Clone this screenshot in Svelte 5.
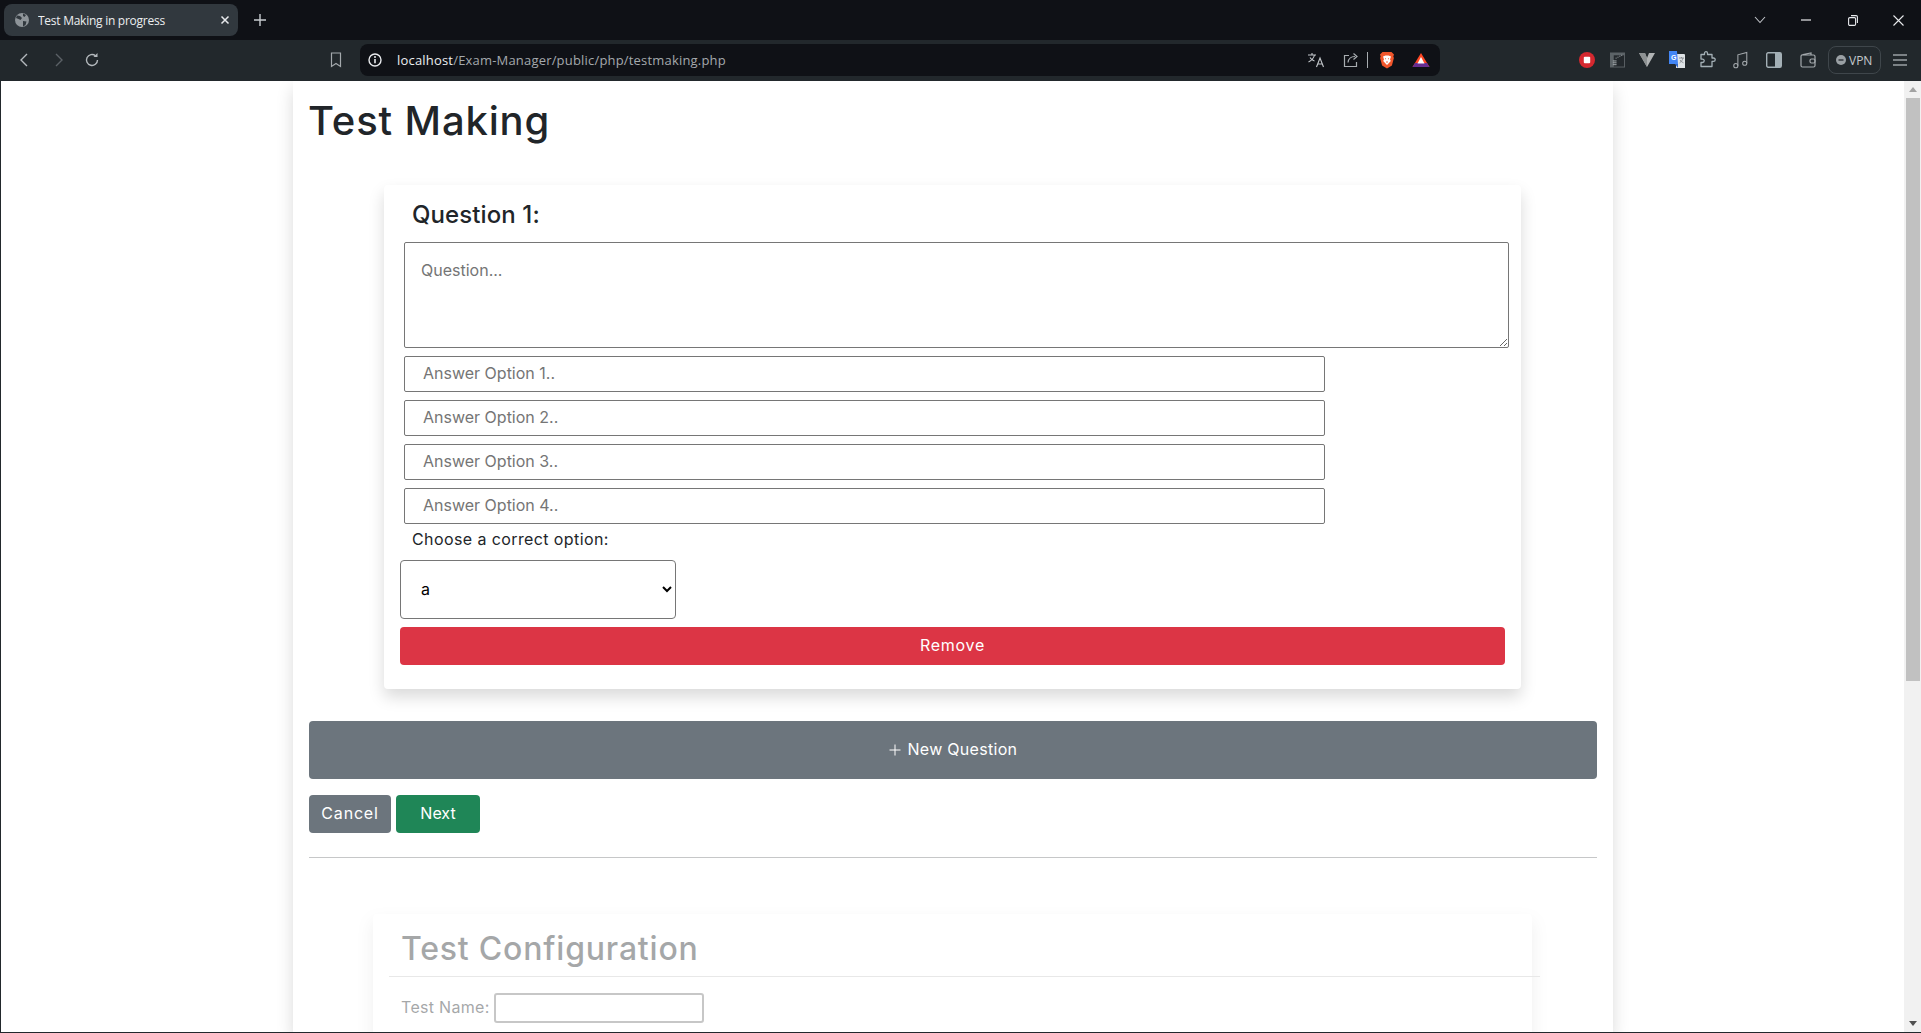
<script>
  const answers = [1, 2, 3, 4];
</script>

<div class="window">
  <header class="tabbar">
    <div class="tab">
      <svg class="favicon" viewBox="0 0 16 16" width="16" height="16"><circle cx="8" cy="8" r="7" fill="#8e9499"/><path d="M3 3.500l3 .5 2 2-1.500 2-2-1L2 6zM9 9l3.500 .5-1 3.500L9 14.500zM9 1.500l3 1.500-1.500 2L9 4z" fill="#31383e"/></svg>
      <span class="tab-title">Test Making in progress</span>
      <svg class="tab-close" viewBox="0 0 10 10" width="10" height="10"><path d="M1.500 1.500l7 7M8.500 1.500l-7 7" stroke="#e8eaed" stroke-width="1.500"/></svg>
    </div>
    <svg class="new-tab" viewBox="0 0 12 12" width="12" height="12"><path d="M6 0v12M0 6h12" stroke="#c8ccd0" stroke-width="1.400"/></svg>
    <div class="spacer"></div>
    <svg class="win w-chev" viewBox="0 0 12 8" width="12" height="8"><path d="M1 1l5 5.500L11 1" fill="none" stroke="#c0c4c8" stroke-width="1.100"/></svg>
    <svg class="win w-min" viewBox="0 0 10 2" width="10" height="2"><path d="M0 1h10" stroke="#e8eaed" stroke-width="1.200"/></svg>
    <svg class="win w-max" viewBox="0 0 10 11" width="10" height="11"><rect x=".6" y="2.600" width="7" height="7.800" rx="1.200" fill="none" stroke="#e8eaed" stroke-width="1.100"/><path d="M3 .6h5.200a1.200 1.200 0 0 1 1.200 1.200V8" fill="none" stroke="#e8eaed" stroke-width="1.100"/></svg>
    <svg class="win w-close" viewBox="0 0 11 11" width="11" height="11"><path d="M.5 .5l10 10M10.500 .5l-10 10" stroke="#e8eaed" stroke-width="1.100"/></svg>
  </header>

  <nav class="toolbar">
    <svg class="tb back" viewBox="0 0 10 14" width="10" height="14"><path d="M8 1L2 7l6 6" fill="none" stroke="#b4b9bd" stroke-width="1.400"/></svg>
    <svg class="tb forward" viewBox="0 0 10 14" width="10" height="14"><path d="M2 1l6 6-6 6" fill="none" stroke="#5b6166" stroke-width="1.400"/></svg>
    <svg class="tb reload" viewBox="0 0 16 16" width="16" height="16"><path d="M13.500 8a5.500 5.500 0 1 1-2-4.300" fill="none" stroke="#b4b9bd" stroke-width="1.400"/><path d="M9.500 5h4V1z" fill="#b4b9bd"/></svg>
    <svg class="tb bookmark" viewBox="0 0 12 16" width="12" height="16"><path d="M1.500 1h9v13.500L6 11.500l-4.500 3z" fill="none" stroke="#a4a9ad" stroke-width="1.200"/></svg>

    <div class="urlbar">
      <svg class="info" viewBox="0 0 14 14" width="14" height="14"><circle cx="7" cy="7" r="6" fill="none" stroke="#e8eaed" stroke-width="1.400"/><path d="M7 6v4.200" stroke="#e8eaed" stroke-width="1.600"/><circle cx="7" cy="4" r="1" fill="#e8eaed"/></svg>
      <span class="url"><b>localhost</b>/Exam-Manager/public/php/testmaking.php</span>
      <div class="spacer"></div>
      <svg class="translate" viewBox="0 0 18 16" width="18" height="16"><path d="M1 3h8M5 1v2M7.500 3c-.7 3-3 5.500-6 7M3 5.500c1 1.800 2.500 3 4.500 3.500" fill="none" stroke="#c4c8cc" stroke-width="1.100"/><path d="M9.500 15l3.500-9 3.500 9M10.700 12h4.600" fill="none" stroke="#c4c8cc" stroke-width="1.100"/></svg>
      <svg class="share" viewBox="0 0 16 16" width="16" height="16"><path d="M6 3.500H1.500v11h12V10" fill="none" stroke="#a8adb1" stroke-width="1.200"/><path d="M5 10.500c.5-4 3-6 7-6M10.500 1.500l3.500 3-3.500 3" fill="none" stroke="#a8adb1" stroke-width="1.200"/></svg>
      <span class="sep"></span>
      <svg class="brave" viewBox="0 0 16 18" width="16" height="18"><path d="M3.500 1h9L15 3.500l-.7 2 .6 1.500-2 7.500L8 17.500 3.100 14.500 1.100 7l.6-1.500-.7-2z" fill="#f1562b"/><path d="M4 5.500L6.500 4.500h3L12 5.500l-1 3 .8 1.500L9 13l-1 1-1-1-2.800-3L5 8.500z" fill="#fff"/><path d="M6 7.500l1 .5M10 7.500l-1 .5M7 11h2" stroke="#f1562b" stroke-width=".9"/></svg>
      <svg class="bat" viewBox="0 0 18 16" width="18" height="16"><path d="M9 1l8.500 14H.5z" fill="#ff4724"/><path d="M.5 15h17L15 11H3z" fill="#662d91"/><path d="M9 5l3.500 6.500h-7z" fill="#fff"/></svg>
    </div>

    <div class="ext">
      <svg class="e-rec" viewBox="0 0 16 16" width="16" height="16"><circle cx="8" cy="8" r="8" fill="#d5282f"/><rect x="4.800" y="4.800" width="6.400" height="6.400" rx="1" fill="#fff"/></svg>
      <svg class="e-meter" viewBox="0 0 16 16" width="15" height="16"><rect width="16" height="16" fill="#5c6367"/><rect x="4" y="3" width="11" height="12" fill="#23282c"/><path d="M6 6h1M8 5h1M10 4h1M12 3h1M3 9h4M3 11h4M3 13h4" stroke="#aeb3b6" stroke-width="1"/></svg>
      <svg class="e-v" viewBox="0 0 16 14" width="16" height="14"><path d="M0 0h6l2 5 2-5h6L8 14z" fill="#b0b3b4"/><path d="M0 0h6l2 5L8 14z" fill="#8d9192"/></svg>
      <svg class="e-gt" viewBox="0 0 16 18" width="16" height="18"><path d="M7 3h8a1 1 0 0 1 1 1v13H7z" fill="#dfe3e6"/><path d="M0 0h8l1 13H0z" fill="#4285f4"/><path d="M6 13h3v4z" fill="#3367c7"/><text x="2" y="9" font-size="7" font-family="Liberation Sans" font-weight="700" fill="#fff">G</text><path d="M10 7h5M12.500 6v1M14 7c-.5 2-1.500 3.500-3.500 5M11 9c.7 1.200 2 2.300 3.500 2.800" stroke="#7c8286" stroke-width=".8" fill="none"/></svg>
      <svg class="e-puzzle" viewBox="0 0 16 18" width="16" height="18"><path d="M1 3.500h3.500V2.200a1.500 1.500 0 0 1 3 0v1.300H12V7h1.500a1.700 1.700 0 0 1 0 3.400H12v5.100H1v-4h1.500a1.700 1.700 0 0 0 0-3.400H1z" fill="none" stroke="#a4b0b6" stroke-width="1.300" stroke-linejoin="round"/></svg>
      <svg class="e-music" viewBox="0 0 16 18" width="15" height="18"><circle cx="3" cy="15" r="2.200" fill="none" stroke="#a4a9ad" stroke-width="1.100"/><circle cx="12.500" cy="12.500" r="2.200" fill="none" stroke="#a4a9ad" stroke-width="1.100"/><path d="M5.200 15V3.500L14.700 1v11.500" fill="none" stroke="#a4a9ad" stroke-width="1.100"/></svg>
      <svg class="e-side" viewBox="0 0 16 16" width="16" height="16"><rect x=".7" y=".7" width="14.600" height="14.600" rx="1.500" fill="none" stroke="#a4b0b6" stroke-width="1.400"/><rect x="9" y="1" width="6" height="14" fill="#a4b0b6"/></svg>
      <svg class="e-wallet" viewBox="0 0 16 16" width="16" height="16"><path d="M1 4.500v9a1.500 1.500 0 0 0 1.500 1.500h11a1.500 1.500 0 0 0 1.500-1.500v-9A1.500 1.500 0 0 0 13.500 3H2.500M1 4.500A2 2 0 0 1 3 2.500L11 1v2" fill="none" stroke="#a4a9ad" stroke-width="1.200"/><rect x="10" y="7" width="5" height="4" rx="1.500" fill="none" stroke="#a4a9ad" stroke-width="1.200"/></svg>
      <div class="vpn">
        <svg viewBox="0 0 10 10" width="10" height="10"><circle cx="5" cy="5" r="5" fill="#9aa0a4"/><path d="M2.500 5h5" stroke="#22282c" stroke-width="1.300"/></svg>
        <span>VPN</span>
      </div>
      <svg class="e-menu" viewBox="0 0 14 12" width="14" height="12"><path d="M0 1h14M0 6h14M0 11h14" stroke="#9aa0a4" stroke-width="1.300"/></svg>
    </div>
  </nav>

  <div class="viewport">
    <main class="page">
      <h1>Test Making</h1>

      <section class="q-card">
        <h4>Question 1:</h4>
        <textarea class="q-text" placeholder="Question..."></textarea>
        {#each answers as n}
          <input class="answer" type="text" placeholder={`Answer Option ${n}..`} />
        {/each}
        <label class="correct" for="correct">Choose a correct option:</label>
        <select id="correct" class="correct-select">
          <option>a</option><option>b</option><option>c</option><option>d</option>
        </select>
        <button class="btn danger remove">Remove</button>
      </section>

      <button class="btn secondary new-q">
        <svg viewBox="0 0 12 12" width="12" height="12"><path d="M6 .5v11M.5 6h11" stroke="#fff" stroke-width="1"/></svg>
        New Question
      </button>

      <div class="actions">
        <button class="btn secondary cancel">Cancel</button>
        <button class="btn success next">Next</button>
      </div>

      <hr class="divider" />

      <section class="config">
        <h2>Test Configuration</h2>
        <hr class="config-rule" />
        <div class="field">
          <label for="testname">Test Name:</label>
          <input id="testname" type="text" />
        </div>
      </section>
    </main>

    <aside class="scrollbar">
      <span class="arrow up"></span>
      <span class="thumb"></span>
      <span class="spacer"></span>
      <span class="arrow down"></span>
    </aside>
  </div>
</div>

<style>
  :global(body) { margin: 0; background: #fff; }
  .window {
    width: 1921px; height: 1033px; display: flex; flex-direction: column; overflow: hidden;
    font-family: "Inter", "Liberation Sans", sans-serif; color: #212529;
  }
  .spacer { flex: 1; }

  .tabbar { height: 40px; background: #0f1116; display: flex; align-items: center; flex: none; }
  .tab {
    margin-left: 4px; width: 234px; height: 32px; background: #31383e; border-radius: 8px;
    display: flex; align-items: center; box-sizing: border-box; padding-left: 10px;
  }
  .favicon { flex: none; }
  .tab-title { margin-left: 8px; font: 12px "Open Sans", sans-serif; color: #eceef0; width: 180px; letter-spacing: -0.26px; white-space: nowrap; overflow: hidden; }
  .tab-close { margin-left: 2px; flex: none; }
  .new-tab { margin-left: 16px; }
  .win { flex: none; }
  .w-close { margin-left: 35px; margin-right: 17px; }
  .w-max { margin-left: 37px; }
  .w-min { margin-left: 35px; }

  .toolbar { height: 41px; box-sizing: border-box; padding-bottom: 1px; background: #22282c; display: flex; align-items: center; flex: none; }
  .back { margin-left: 19px; }
  .forward { margin-left: 25px; }
  .reload { margin-left: 20px; }
  .bookmark { margin-left: 230px; }
  .urlbar {
    margin-left: 18px; width: 1080px; height: 32px; background: #0f1116; border-radius: 8px;
    display: flex; align-items: center; box-sizing: border-box; padding: 0 10px 0 8px;
  }
  .url { margin-left: 15px; font: 13px "Open Sans", sans-serif; color: #a4a9ad; white-space: nowrap; letter-spacing: 0.19px; }
  .url b { font-weight: 400; color: #eceef0; }
  .share { margin-left: 18px; }
  .sep { width: 1px; height: 16px; background: #a8adb1; margin-left: 8px; }
  .brave { margin-left: 11px; }
  .bat { margin-left: 17px; }

  .ext { display: flex; align-items: center; margin-left: 139px; }
  .e-meter { margin-left: 15px; }
  .e-v { margin-left: 14px; }
  .e-gt { margin-left: 14px; }
  .e-puzzle { margin-left: 15px; }
  .e-music { margin-left: 17px; }
  .e-side { margin-left: 18px; }
  .e-wallet { margin-left: 18px; }
  .vpn {
    margin-left: 12px; width: 53px; height: 28px; box-sizing: border-box; border: 1px solid #3f464b; border-radius: 8px;
    display: flex; align-items: center; gap: 3px; padding-left: 7px;
    font: 12px "Open Sans", sans-serif; color: #c4c8cc;
  }
  .e-menu { margin-left: 12px; }

  .viewport {
    flex: 1; min-height: 0; display: flex; background: #fff; overflow: hidden;
    border-left: 1px solid #22282c; border-bottom: 1px solid #22282c;
  }
  .page {
    width: 1320px; height: 100%; margin-left: 292px; flex: none; box-sizing: border-box; padding: 16px 16px 0;
    box-shadow: 0 8px 16px rgba(0,0,0,.15); background: #fff; overflow: hidden;
  }
  .scrollbar {
    margin-left: auto; width: 17px; background: #f1f1f1; display: flex; flex-direction: column; flex: none; align-items: center;
  }
  .thumb { width: 14px; height: 583px; background: #c1c1c1; flex: none; margin-left: 1px; }
  .arrow { width: 0; height: 0; border-left: 4px solid transparent; border-right: 4px solid transparent; flex: none; }
  .arrow.up { border-bottom: 5px solid #a3a3a3; margin: 6px 0 6px; }
  .arrow.down { border-top: 5px solid #505050; margin: 6px 0 6px; }

  h1 { margin: 0 0 40px -1px; font-size: 40px; line-height: 48px; font-weight: 450; letter-spacing: 0.85px; }

  .q-card {
    width: 1137px; margin-left: 75px; box-sizing: border-box; padding: 15px 16px 24px;
    box-shadow: 0 8px 16px rgba(0,0,0,.15); border-radius: 4px; background: #fff;
    display: flex; flex-direction: column; align-items: flex-start;
  }
  h4 { margin: 0 0 13px 12px; font-size: 24px; line-height: 29px; font-weight: 450; letter-spacing: 0.1px; }

  textarea, input, select, button { font-family: inherit; box-sizing: border-box; }
  ::placeholder { color: #757575; opacity: 1; }

  .q-text {
    width: 1105px; height: 106px; margin-left: 4px; border: 1px solid #767676; border-radius: 2px;
    padding: 17px 16px; font-size: 16px; display: block;
  }
  .answer {
    display: block; width: 921px; height: 36px; margin: 8px 0 0 4px; border: 1px solid #767676; border-radius: 2px;
    padding: 0 18px 2px; font-size: 16px;
  }
  .correct { margin: 3px 0 0 12px; font-size: 16px; line-height: 24px; letter-spacing: 0.4px; }
  .correct-select {
    margin-top: 9px; width: 276px; height: 59px; border: 1px solid #767676; border-radius: 4px; background: #fff;
    padding: 0 16px 2px; font-size: 16px; color: #000;
  }
  .btn { border: 0; border-radius: 4px; color: #fff; font-size: 16px; line-height: 24px; padding: 0 0 2px; display: block; }
  .danger { background: #dc3545; }
  .secondary { background: #6c757d; }
  .success { background: #1f8657; }
  .remove { width: 100%; height: 38px; margin-top: 8px; letter-spacing: 0.7px; }
  .new-q { width: 100%; height: 58px; margin-top: 32px; letter-spacing: 0.3px; }
  .new-q svg { margin-right: 2px; vertical-align: -1px; }
  .actions { display: flex; gap: 5px; margin-top: 16px; }
  .cancel { width: 82px; height: 38px; letter-spacing: 0.8px; }
  .next { width: 84px; height: 38px; }
  .divider { margin: 24px 0 56px; border: 0; height: 1px; background: #c6c7c8; }

  .config {
    width: 1159px; margin-left: 64px; height: 130px; box-sizing: border-box; padding: 16px;
    box-shadow: 0 8px 16px rgba(0,0,0,.15); opacity: .4; background: #fff; border-radius: 4px;
  }
  h2 { margin: 0 0 8px 12px; font-size: 32px; line-height: 38px; font-weight: 450; letter-spacing: 0.8px; }
  .config-rule { margin: 0; width: 1151px; height: 1px; border: 0; background: #c6c7c8; }
  .field { display: flex; align-items: center; margin: 16px 0 0 12px; font-size: 16px; letter-spacing: 0.3px; }
  .field label { padding-bottom: 2px; }
  .field input { width: 210px; height: 30px; margin-left: 4px; border: 2px solid #767676; border-radius: 3px; }
</style>
